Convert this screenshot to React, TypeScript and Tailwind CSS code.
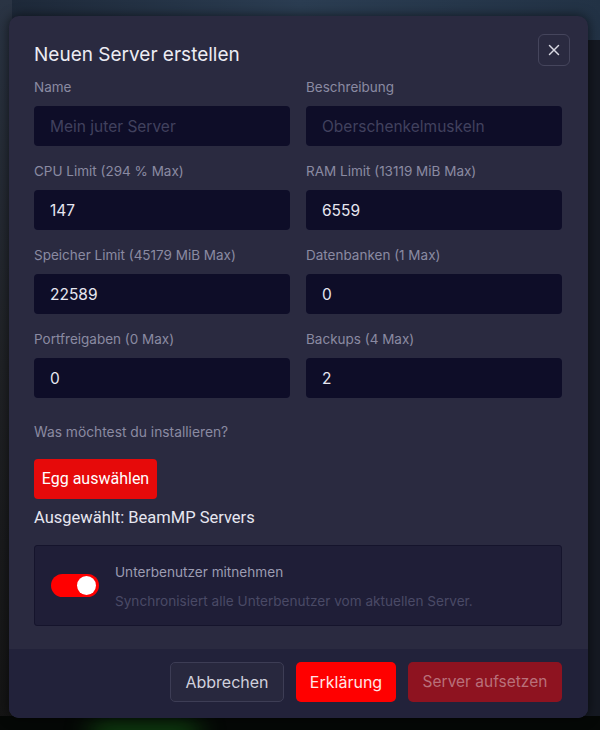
import { X } from 'lucide-react';

const fields = [
  { label: 'Name', value: '', placeholder: 'Mein juter Server' },
  { label: 'Beschreibung', value: '', placeholder: 'Oberschenkelmuskeln' },
  { label: 'CPU Limit (294 % Max)', value: '147' },
  { label: 'RAM Limit (13119 MiB Max)', value: '6559' },
  { label: 'Speicher Limit (45179 MiB Max)', value: '22589' },
  { label: 'Datenbanken (1 Max)', value: '0' },
  { label: 'Portfreigaben (0 Max)', value: '0' },
  { label: 'Backups (4 Max)', value: '2' },
];

function Field({ label, value, placeholder }: { label: string; value: string; placeholder?: string }) {
  return (
    <div className="flex flex-col">
      <label className="h-4 text-[13.5px] leading-4 text-[#8a8aa2]">{label}</label>
      <input
        readOnly
        value={value}
        placeholder={placeholder}
        className="mt-[11px] h-10 w-full rounded-[4px] bg-[#0e0d28] px-4 text-[15.5px] text-[#e6e6f0] outline-none placeholder:text-[#41415e]"
      />
    </div>
  );
}

export default function App() {
  return (
    <div
      className="relative h-[730px] w-[600px] overflow-hidden bg-[#151922] pt-[16px] pl-[9px]"
      style={{ fontFamily: 'Inter, "Noto Sans", sans-serif' }}
    >
      {/* blurred page behind the dialog */}
      <div className="absolute inset-x-0 top-0 h-[40px] bg-gradient-to-r from-[#1d2838] via-[#2b3d52] to-[#223245]" />
      <div className="absolute left-0 top-0 h-full w-[12px] bg-gradient-to-b from-[#2a3444] via-[#202226] to-[#141414]" />
      <div className="absolute bottom-0 left-0 h-[14px] w-full bg-[#050806]" />
      <div className="absolute bottom-[-10px] left-[90px] h-[16px] w-[110px] rounded-full bg-[#145a14] blur-md" />

      <div className="relative flex h-[702px] w-[579px] flex-col overflow-hidden rounded-[10px] bg-[#2a2a40] shadow-[0_0_12px_rgba(0,0,0,0.6)]">
        <div className="flex flex-1 flex-col pl-[25px] pr-[26px] pt-[18px]">
          <div className="flex items-start justify-between">
            <h2 className="mt-[7px] text-[19px] leading-7 text-[#ececf3]">Neuen Server erstellen</h2>
            <button className="mr-[-8px] flex h-8 w-8 items-center justify-center rounded-[6px] border border-[#45455c] text-[#d8d8e2]">
              <X size={18} strokeWidth={2} />
            </button>
          </div>

          <div className="mt-[10px] grid grid-cols-2 gap-x-4 gap-y-[17px]">
            {fields.map((f) => (
              <Field key={f.label} {...f} />
            ))}
          </div>

          <p className="mt-[26px] h-4 text-[13.8px] leading-4 text-[#8a8aa2]">Was möchtest du installieren?</p>

          <button
            className="mt-[19px] h-10 w-[123px] rounded-[4px] bg-[#e60a0a] text-[16px] text-white"
            style={{ fontFamily: 'Roboto, sans-serif' }}
          >
            Egg auswählen
          </button>
          <p className="mt-[7px] text-[16.5px] leading-6 text-[#e6e6f0]" style={{ fontFamily: 'Roboto, sans-serif' }}>
            Ausgewählt: BeamMP Servers
          </p>

          <div className="mt-[15px] flex h-[81px] items-start gap-4 rounded-[3px] border border-[#15142c] bg-[#1f1e37] pl-4 pt-[18px]">
            <div className="mt-[10px] flex h-[23px] w-[48px] items-center justify-end rounded-full bg-[#ff0000] pr-[3px]">
              <div className="h-[19px] w-[19px] rounded-full bg-white" />
            </div>
            <div className="flex flex-col">
              <span className="text-[13.6px] leading-4 text-[#9c9cb2]">Unterbenutzer mitnehmen</span>
              <span className="mt-[13px] text-[13.6px] leading-4 text-[#4a4a66]">
                Synchronisiert alle Unterbenutzer vom aktuellen Server.
              </span>
            </div>
          </div>
        </div>

        <div className="flex h-[69px] items-start justify-end gap-3 bg-[#22223a] pr-[26px] pt-[13px]">
          <button className="h-10 w-[114px] rounded-[5px] border border-[#3d3d55] bg-[#28283e] text-[16px] text-[#d0d0dc]">
            Abbrechen
          </button>
          <button className="h-10 w-[100px] rounded-[5px] bg-[#ff0000] text-[16px] text-[#ffe6e6]">Erklärung</button>
          <button className="h-10 w-[154px] rounded-[5px] bg-[#8e1320] text-[15.5px] text-[#b9707a]">
            Server aufsetzen
          </button>
        </div>
      </div>
    </div>
  );
}
